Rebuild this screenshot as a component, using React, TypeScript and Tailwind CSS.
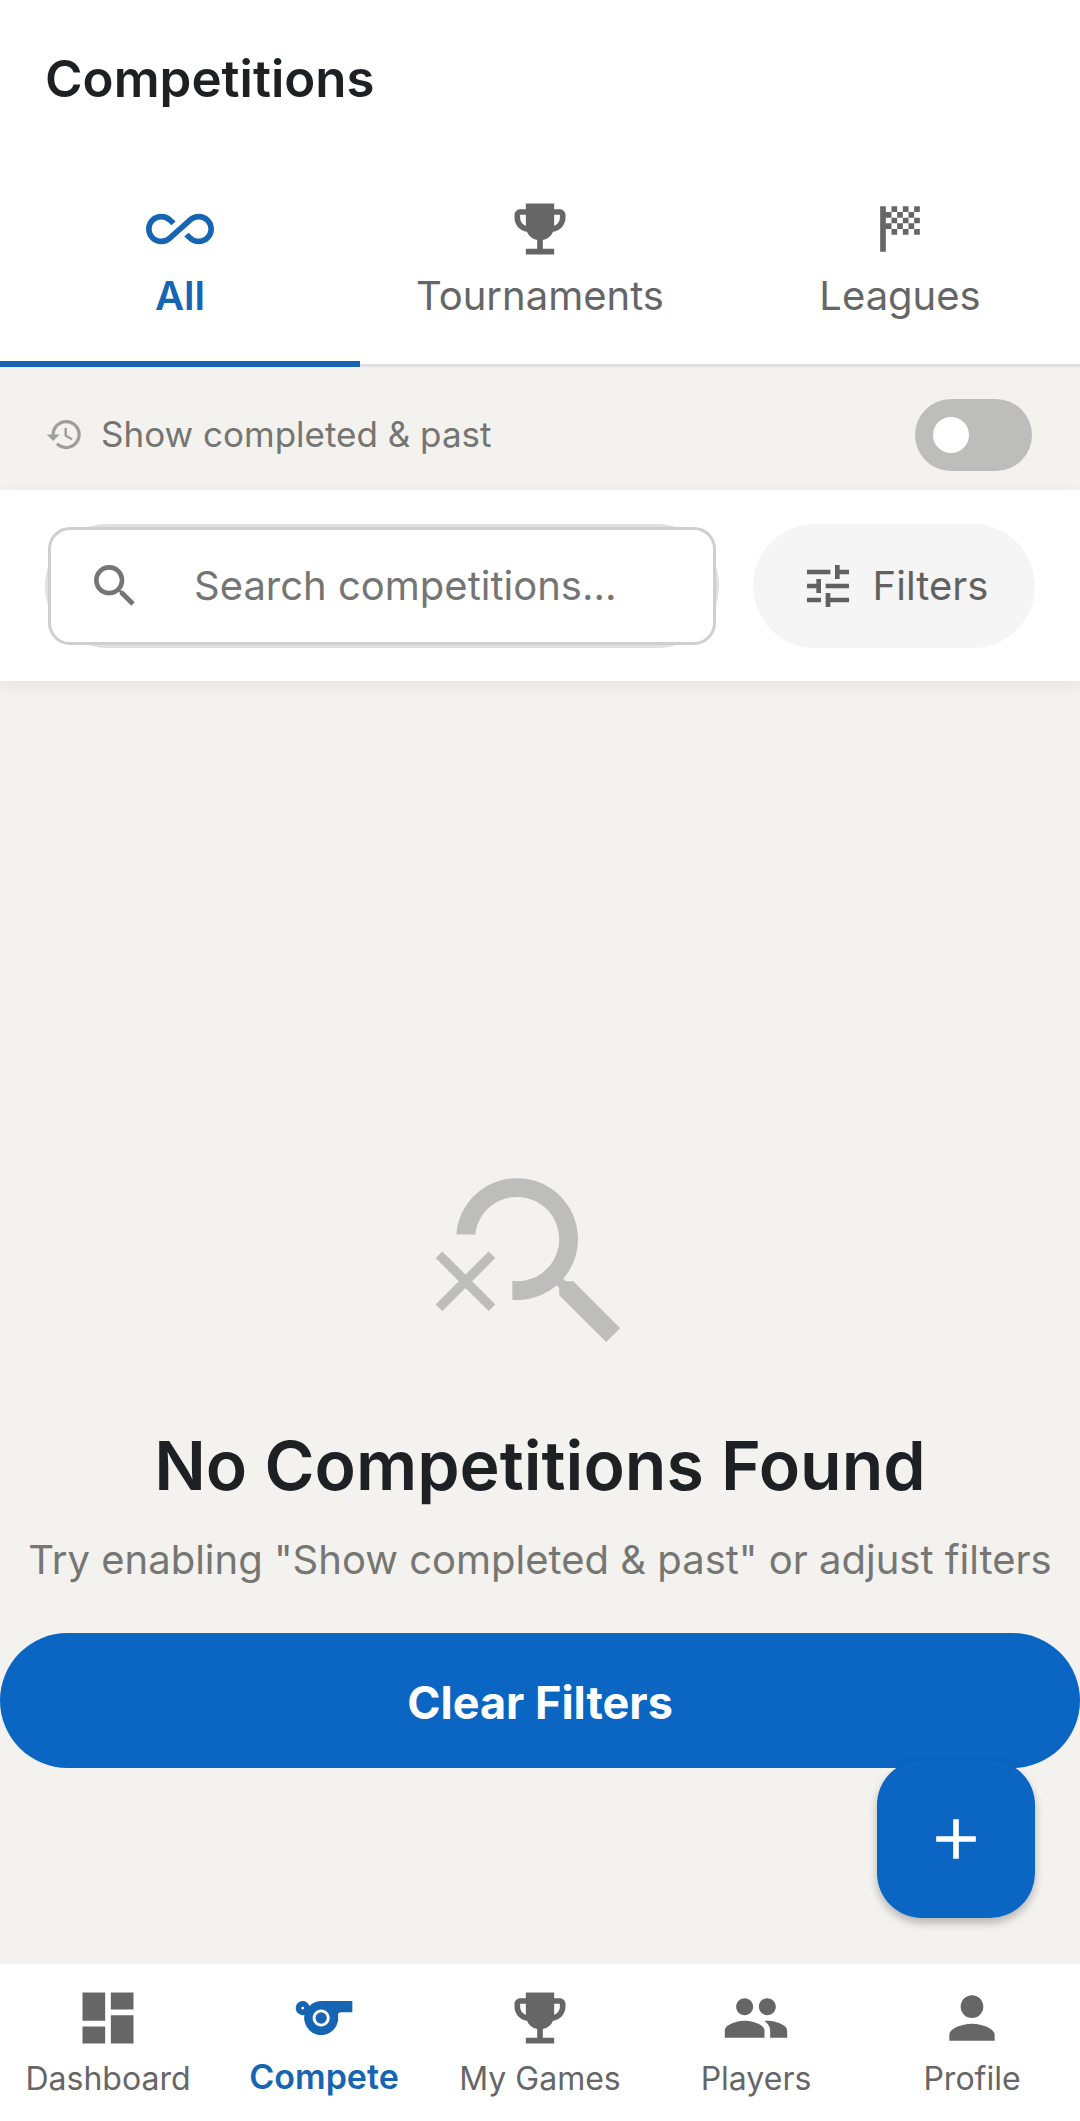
import React, { useState } from 'react';
import {
  MdAdd,
  MdAllInclusive,
  MdDashboard,
  MdEmojiEvents,
  MdHistory,
  MdPeople,
  MdPerson,
  MdSearch,
  MdSearchOff,
  MdSports,
  MdSportsScore,
  MdTune,
} from 'react-icons/md';
import type { IconType } from 'react-icons';

interface NavItem {
  label: string;
  icon: IconType;
}

const tabs: NavItem[] = [
  { label: 'All', icon: MdAllInclusive },
  { label: 'Tournaments', icon: MdEmojiEvents },
  { label: 'Leagues', icon: MdSportsScore },
];

const navItems: NavItem[] = [
  { label: 'Dashboard', icon: MdDashboard },
  { label: 'Compete', icon: MdSports },
  { label: 'My Games', icon: MdEmojiEvents },
  { label: 'Players', icon: MdPeople },
  { label: 'Profile', icon: MdPerson },
];

const TabBar: React.FC = () => {
  const [active, setActive] = useState(0);

  return (
    <div role="tablist" className="grid grid-cols-3 bg-white">
      {tabs.map(({ label, icon: Icon }, index) => (
        <button
          key={label}
          role="tab"
          aria-selected={index === active}
          onClick={() => setActive(index)}
          className={`flex flex-col items-center gap-1 h-[209px] pt-[37px] text-[40px] leading-[58px] ${
            index === active
              ? 'border-b-6 border-[#1565b3] text-[#1565b3] font-semibold'
              : 'border-b-3 border-[#e0e0e0] text-[#666666]'
          }`}
        >
          <Icon className="w-[68px] h-[68px]" />
          {label}
        </button>
      ))}
    </div>
  );
};

const CompletedToggle: React.FC = () => {
  const [checked, setChecked] = useState(false);

  return (
    <div className="flex items-center h-[123px] pt-3 pl-[45px] pr-12">
      <MdHistory className="w-[39px] h-[39px] mr-[17px] text-[#9e9e9b]" />
      <label htmlFor="show-completed" className="flex-1 text-[35px] leading-[45px] text-[#757572]">
        Show completed &amp; past
      </label>
      <input
        id="show-completed"
        type="checkbox"
        checked={checked}
        onChange={e => setChecked(e.target.checked)}
        className="appearance-none flex items-center w-[117px] h-[72px] px-[18px] rounded-full bg-[#bdbdbc] checked:bg-[#0a66c2] checked:justify-end before:block before:w-9 before:h-9 before:rounded-full before:bg-white"
      />
    </div>
  );
};

const SearchBar: React.FC = () => {
  const [query, setQuery] = useState('');

  return (
    <div className="relative z-10 flex gap-[34px] px-[45px] pt-[34px] pb-[33px] bg-white shadow-[0_4px_16px_rgba(0,0,0,0.06)]">
      <div className="flex-1 min-w-0 h-[124px] p-[3px] rounded-full bg-[#e0e0e0]">
        <div className="flex items-center h-full pl-9 rounded-[22px] border-3 border-[#cfcfcf] bg-white">
          <MdSearch className="w-14 h-14 shrink-0 text-[#757575]" />
          <input
            type="text"
            aria-label="Search competitions"
            value={query}
            onChange={e => setQuery(e.target.value)}
            placeholder="Search competitions..."
            className="flex-1 min-w-0 ml-[51px] text-[40px] leading-[58px] outline-none placeholder:text-[#757575]"
          />
        </div>
      </div>
      <button className="flex items-center justify-center gap-[17px] min-w-[282px] h-[124px] rounded-full bg-[#f5f5f5] text-[40px] leading-[58px] text-[#616161]">
        <MdTune className="w-14 h-14" />
        Filters
      </button>
    </div>
  );
};

const EmptyState: React.FC = () => (
  <main className="relative flex-1 flex flex-col items-center justify-center pt-[273px]">
    <MdSearchOff className="w-[225px] h-[225px] text-[#bdbdbb]" />
    <h2 className="mt-[45px] text-[68px] leading-[90px] font-semibold text-[#1d2123]">
      No Competitions Found
    </h2>
    <p className="mt-[21px] text-[40px] leading-[58px] whitespace-nowrap text-[#767673]">
      Try enabling "Show completed &amp; past" or adjust filters
    </p>
    <button className="w-full h-[135px] mt-11 pt-1 rounded-full bg-[#0a66c2] text-[45px] leading-[58px] font-bold text-white">
      Clear Filters
    </button>
    <button
      aria-label="Add competition"
      className="absolute right-[45px] bottom-[46px] flex items-center justify-center w-[158px] h-[158px] rounded-[45px] bg-[#0a66c2] text-white shadow-[0_5px_8px_rgba(0,0,0,0.25)]"
    >
      <MdAdd className="w-[68px] h-[68px]" />
    </button>
  </main>
);

const BottomNav: React.FC = () => {
  const [active, setActive] = useState(1);

  return (
    <nav className="grid grid-cols-5 h-[157px] bg-white">
      {navItems.map(({ label, icon: Icon }, index) => (
        <button
          key={label}
          onClick={() => setActive(index)}
          className={`flex flex-col items-center gap-1.5 pt-5 whitespace-nowrap ${
            index === active
              ? 'text-[34px] leading-[38px] font-semibold text-[#1565b3]'
              : 'text-[32px] leading-[42px] text-[#666666]'
          }`}
        >
          <Icon className="w-[68px] h-[68px]" />
          {label}
        </button>
      ))}
    </nav>
  );
};

const App: React.FC = () => {
  return (
    <div className="flex flex-col min-h-screen bg-[#f3f2ef] font-['Inter',sans-serif] [font-optical-sizing:none]">
      <header className="flex items-center h-[158px] px-[45px] bg-white">
        <h1 className="text-[51px] leading-[68px] font-semibold text-[#1d2123]">Competitions</h1>
      </header>
      <TabBar />
      <CompletedToggle />
      <SearchBar />
      <EmptyState />
      <BottomNav />
    </div>
  );
};

export default App;
